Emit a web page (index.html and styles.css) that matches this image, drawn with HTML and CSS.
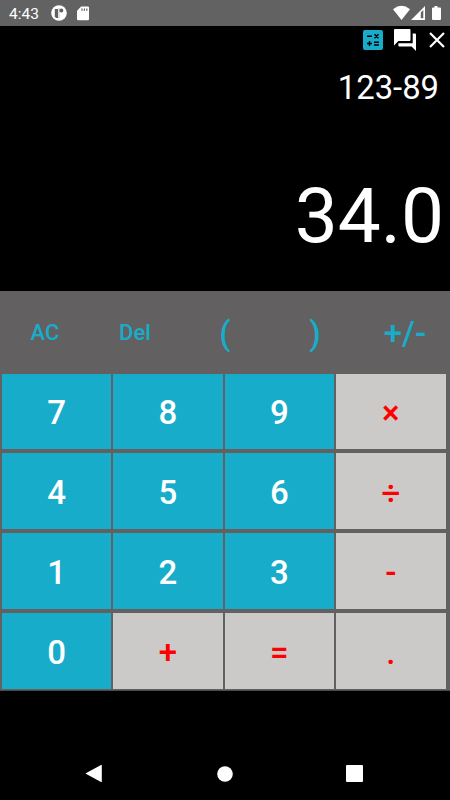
FILE: index.html
```html
<!DOCTYPE html>
<html lang="en">
<head>
<meta charset="utf-8">
<title>Calculator</title>
<link rel="stylesheet" href="styles.css">
</head>
<body>
<header class="status">
  <span class="time">4:43</span>
  <svg class="app-icon" width="16" height="16" viewBox="0 0 16 16"><circle cx="8" cy="8" r="7.8" fill="#fff"/><path d="M3.8 4H7v9H5.2L3.8 11.5z" fill="#626060"/><circle cx="10.3" cy="5.5" r="2" fill="#626060"/><path d="M8 3v10" stroke="#aaa" stroke-width=".7"/></svg>
  <svg class="card-icon" width="12" height="15" viewBox="0 0 12 15"><path d="M4.2.5H11a1 1 0 0 1 1 1V13a1.3 1.3 0 0 1-1.3 1.3H1.3A1.3 1.3 0 0 1 0 13V4.7z" fill="#fff"/><path d="M5 2.4v2.3M7.4 2.4v2.3M9.8 2.4v2.3" stroke="#626060" stroke-width="1.2"/></svg>
  <svg class="signals" width="50" height="16" viewBox="0 0 50 16"><path d="M0 4.2Q8.5-2.6 17 4.2L8.5 15z" fill="#fff"/><path fill-rule="evenodd" d="M32 1v14H18zM30.3 5L27.8 7.5V13.3H30.3z" fill="#fff"/><path d="M41.5 1h3v1.5H47a1 1 0 0 1 1 1V14a1 1 0 0 1-1 1h-7a1 1 0 0 1-1-1V3.500a1 1 0 0 1 1-1h1.500z" fill="#fff"/></svg>
</header>
<main>
  <section class="display">
    <div class="tools">
      <svg width="20" height="20" viewBox="0 0 20 20"><rect width="20" height="20" rx="2" fill="#17adca"/><path d="M4 6.300h5M11.500 4.300l4 4M15.500 4.300l-4 4M4 13.500h5M6.500 11v5M11 12.300h5M11 14.900h5" stroke="#000" stroke-width="1.500"/></svg>
      <svg width="22" height="22" viewBox="2 2 20 20"><path d="M21 6h-2v9H6v2c0 .55.45 1 1 1h11l4 4V7c0-.55-.45-1-1-1zm-4 6V3c0-.55-.45-1-1-1H3c-.55 0-1 .45-1 1v14l4-4h10c.55 0 1-.45 1-1z" fill="#fff"/></svg>
      <svg width="16" height="16" viewBox="0 0 16 16"><path d="M1 1l14 14M15 1L1 15" stroke="#fff" stroke-width="2.200"/></svg>
    </div>
    <div class="expression">123-89</div>
    <div class="result">34.0</div>
  </section>
  <section class="pad">
    <div class="functions">
      <button class="word">AC</button><button class="word">Del</button><button>(</button><button>)</button><button>+/-</button>
    </div>
    <div class="keys">
      <button>7</button><button>8</button><button>9</button><button class="op">×</button>
      <button>4</button><button>5</button><button>6</button><button class="op">÷</button>
      <button>1</button><button>2</button><button>3</button><button class="op">-</button>
      <button>0</button><button class="op">+</button><button class="op">=</button><button class="op">.</button>
    </div>
  </section>
</main>
<nav class="nav">
  <svg width="18" height="19" viewBox="0 0 18 19"><path d="M16 .9L.8 9.200v.6L16 18.100q.8.300.8-.6v-16q0-.9-.8-.6z" fill="#fff"/></svg>
  <svg width="16" height="16" viewBox="0 0 16 16"><circle cx="8" cy="8" r="7.800" fill="#fff"/></svg>
  <svg width="17" height="17" viewBox="0 0 17 17"><rect width="17" height="17" rx="1" fill="#fff"/></svg>
</nav>
</body>
</html>
```
FILE: styles.css
```css
* { box-sizing: border-box; }
body {
  margin: 0;
  width: 450px;
  height: 800px;
  overflow: hidden;
  background: #000;
  color: #fff;
  font-family: Roboto, sans-serif;
}
svg { display: block; flex: none; }
.status {
  display: flex;
  align-items: center;
  height: 26px;
  padding: 0 7px 0 9px;
  background: #626262;
}
.time { width: 42px; font-size: 15.5px; line-height: 26px; padding-top: 1px; }
.app-icon { margin-right: 10px; }
.signals { margin-left: auto; }
.display { height: 265px; }
.tools {
  display: flex;
  justify-content: flex-end;
  align-items: center;
  height: 27px;
  padding-right: 5px;
}
.tools svg + svg { margin-left: 11px; }
.tools svg:last-child { margin-left: 13px; }
.expression {
  height: 70px;
  padding-right: 11px;
  text-align: right;
  font-size: 32.8px;
  line-height: 70px;
}
.result {
  height: 100px;
  margin-top: 43px;
  padding-right: 6px;
  text-align: right;
  font-size: 76.6px;
  line-height: 100px;
}
.pad { height: 400px; background: #626060; border-bottom: 1px solid #4b4949; }
button {
  margin: 0;
  padding: 2px 0 0;
  border: 0;
  color: #fff;
  background: none;
  font: 500 33px/1 Roboto, sans-serif;
}
.functions { display: grid; grid-template-columns: repeat(5, 90px); height: 82.5px; }
.functions button { color: #17adca; }
.functions .word { font-size: 22px; }
.keys {
  display: grid;
  grid-template-columns: repeat(3, 109.4px) 110px;
  grid-auto-rows: 75.8px;
  gap: 4px 1.9px;
  padding-left: 2px;
}
.keys button { padding-top: 3px; background: #17adca; }
.keys .op { color: #f00; background: #cbcac8; }
.nav {
  display: flex;
  align-items: center;
  justify-content: space-between;
  height: 109px;
  padding: 56px 87px 0 85px;
}
```
